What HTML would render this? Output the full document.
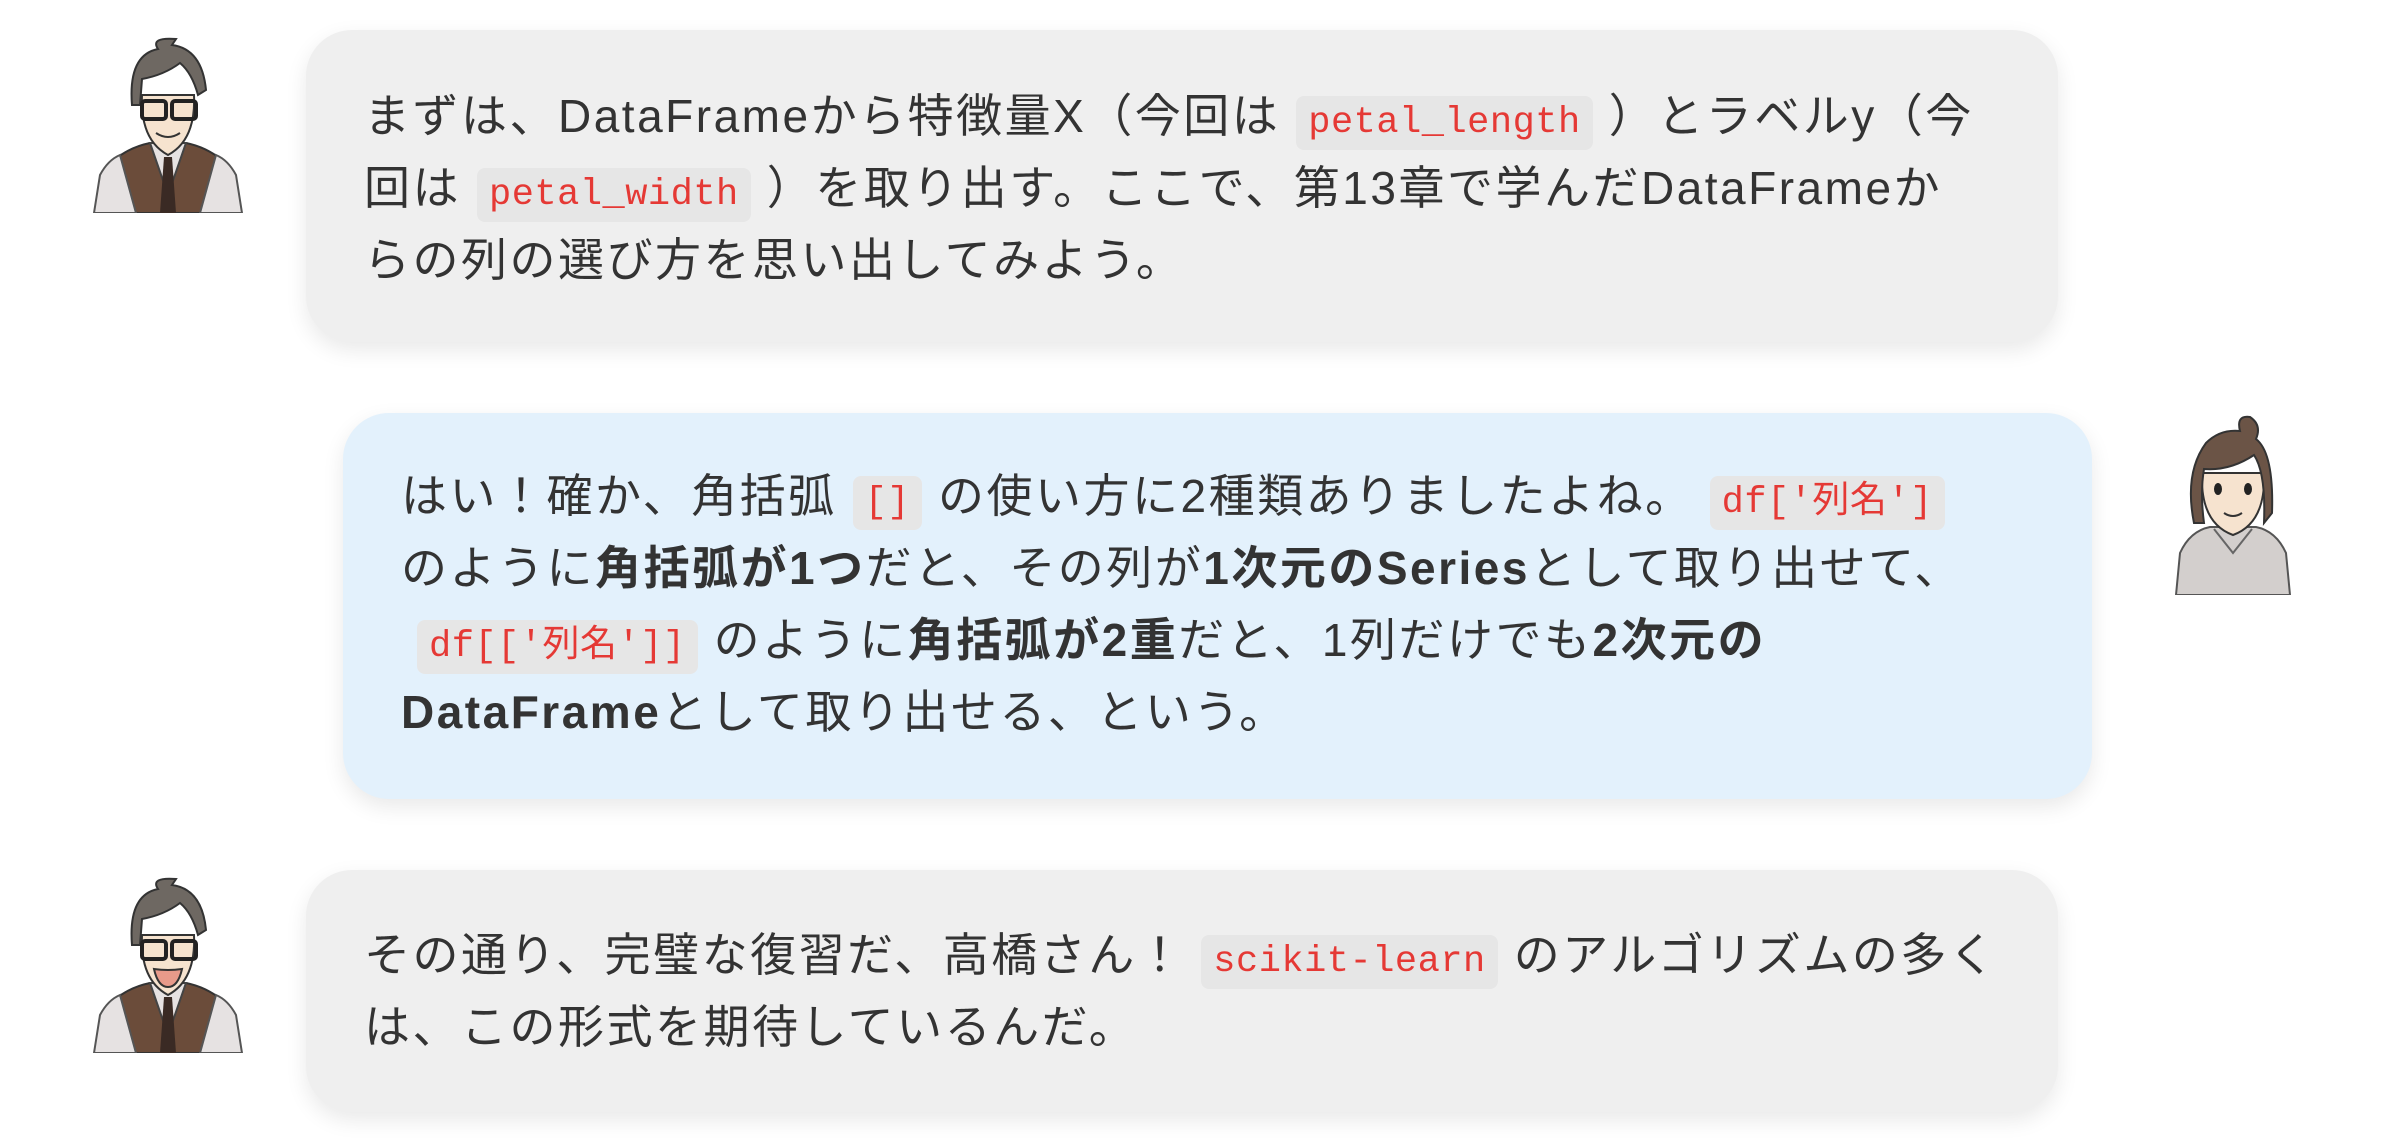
<!DOCTYPE html>
<html><head><meta charset="utf-8"><style>
body{margin:0;width:2400px;height:1140px;background:#fff;overflow:hidden;font-family:"Liberation Sans","Noto Sans CJK JP",sans-serif;color:#333;}
.b{position:absolute;border-radius:46px;box-shadow:0 8px 22px rgba(0,0,0,0.09);font-size:46px;letter-spacing:2.5px;line-height:72px;box-sizing:border-box;}
.g{background:#efefef;}
.bl{background:#e3f1fc;}
code{font-family:"Liberation Mono","Noto Sans CJK JP",monospace;font-size:37px;letter-spacing:0.5px;color:#e53935;background:#e6e6e6;border-radius:8px;padding:6px 12px;margin:0 16px;line-height:40px;}
b{font-weight:bold;}
.av{position:absolute;}
.line{white-space:nowrap;height:72px;overflow:visible;}
</style></head><body>

<svg class="av" style="left:80px;top:35px" width="176" height="178" viewBox="0 0 176 178">
<path d="M30 178 L34 125 Q50 112 70 108 L106 108 Q126 112 142 125 L146 178Z" fill="#6b4c3a" stroke="#333" stroke-width="2"/>
<path d="M14 178 L20 140 Q28 125 40 120 L56 178Z M162 178 L156 140 Q148 125 136 120 L120 178Z" fill="#e6e2e2" stroke="#555" stroke-width="2"/>
<path d="M70 108 L88 160 L106 108Z" fill="#e6e2e2" stroke="#444" stroke-width="2"/>
<path d="M84 122 L92 122 L96 178 L80 178Z" fill="#3a2a24"/>
<path d="M62 60 Q60 105 88 120 Q116 105 114 60 Z" fill="#f6e3cf" stroke="#333" stroke-width="2"/>
<path d="M52 70 Q48 20 78 14 Q70 2 96 4 L92 10 Q122 14 126 55 L118 60 Q112 38 100 28 Q84 40 62 44 L60 70Z" fill="#6e6862" stroke="#333" stroke-width="2"/>
<rect x="62" y="66" width="24" height="18" rx="3" fill="none" stroke="#222" stroke-width="4"/>
<rect x="92" y="66" width="24" height="18" rx="3" fill="none" stroke="#222" stroke-width="4"/>
<path d="M76 98 Q88 106 100 98" fill="none" stroke="#333" stroke-width="2"/>
</svg>

<div class="b g" style="left:306px;top:30px;width:1752px;height:312px;padding:50px 0 0 58px;">
<div class="line">まずは、DataFrameから特徴量X（今回は<code>petal_length</code>）とラベルy（今</div>
<div class="line">回は<code>petal_width</code>）を取り出す。ここで、第13章で学んだDataFrameか</div>
<div class="line">らの列の選び方を思い出してみよう。</div>
</div>

<svg class="av" style="left:2170px;top:413px" width="126" height="182" viewBox="0 0 126 182">
<path d="M6 182 L10 140 Q20 118 40 114 L86 114 Q106 118 116 140 L120 182Z" fill="#d3cfcd" stroke="#555" stroke-width="2"/>
<path d="M44 116 L63 140 L82 116" fill="none" stroke="#666" stroke-width="2"/>
<path d="M32 60 Q30 110 63 122 Q96 110 94 60Z" fill="#f6e3cf" stroke="#333" stroke-width="2"/>
<path d="M24 110 Q14 60 36 30 Q50 16 70 18 Q66 2 80 4 Q92 12 86 26 Q104 40 102 100 L94 110 Q96 60 84 42 Q60 58 34 56 Q30 80 34 110Z" fill="#6b5446" stroke="#333" stroke-width="2"/>
<ellipse cx="48" cy="76" rx="4" ry="6" fill="#222"/><ellipse cx="78" cy="76" rx="4" ry="6" fill="#222"/>
<path d="M54 100 Q63 106 72 100" fill="none" stroke="#333" stroke-width="2"/>
</svg>

<div class="b bl" style="left:343px;top:413px;width:1749px;height:386px;padding:47px 0 0 58px;">
<div class="line">はい！確か、角括弧<code>[]</code>の使い方に2種類ありましたよね。<code>df['列名']</code></div>
<div class="line">のように<b>角括弧が1つ</b>だと、その列が<b>1次元のSeries</b>として取り出せて、</div>
<div class="line"><code>df[['列名']]</code>のように<b>角括弧が2重</b>だと、1列だけでも<b>2次元の</b></div>
<div class="line"><b>DataFrame</b>として取り出せる、という。</div>
</div>

<svg class="av" style="left:80px;top:875px" width="176" height="178" viewBox="0 0 176 178">
<path d="M30 178 L34 125 Q50 112 70 108 L106 108 Q126 112 142 125 L146 178Z" fill="#6b4c3a" stroke="#333" stroke-width="2"/>
<path d="M14 178 L20 140 Q28 125 40 120 L56 178Z M162 178 L156 140 Q148 125 136 120 L120 178Z" fill="#e6e2e2" stroke="#555" stroke-width="2"/>
<path d="M70 108 L88 160 L106 108Z" fill="#e6e2e2" stroke="#444" stroke-width="2"/>
<path d="M84 122 L92 122 L96 178 L80 178Z" fill="#3a2a24"/>
<path d="M62 60 Q60 105 88 120 Q116 105 114 60 Z" fill="#f6e3cf" stroke="#333" stroke-width="2"/>
<path d="M52 70 Q48 20 78 14 Q70 2 96 4 L92 10 Q122 14 126 55 L118 60 Q112 38 100 28 Q84 40 62 44 L60 70Z" fill="#6e6862" stroke="#333" stroke-width="2"/>
<rect x="62" y="66" width="24" height="18" rx="3" fill="none" stroke="#222" stroke-width="4"/>
<rect x="92" y="66" width="24" height="18" rx="3" fill="none" stroke="#222" stroke-width="4"/>
<path d="M74 94 Q88 96 102 94 Q98 112 88 112 Q78 112 74 94Z" fill="#e89a8a" stroke="#333" stroke-width="2"/>
</svg>

<div class="b g" style="left:306px;top:870px;width:1752px;height:242px;padding:49px 0 0 58px;">
<div class="line">その通り、完璧な復習だ、高橋さん！<code>scikit-learn</code>のアルゴリズムの多く</div>
<div class="line">は、この形式を期待しているんだ。</div>
</div>
</body></html>
